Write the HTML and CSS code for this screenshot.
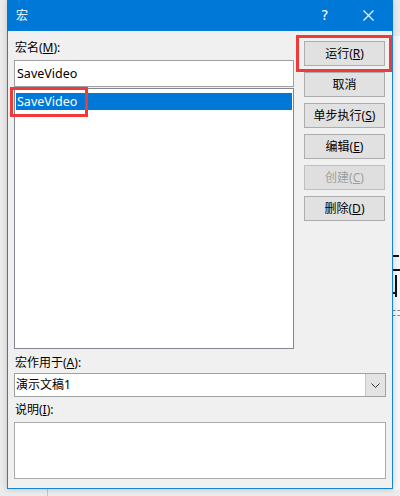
FILE: index.html
```html
<!DOCTYPE html>
<html lang="zh-CN">
<head>
<meta charset="utf-8">
<title>宏</title>
<link rel="stylesheet" href="styles.css">
</head>
<body>
<div class="backdrop">
  <span class="slide"></span>
  <span class="ruler-line"></span>
  <span class="frag fh1"></span>
  <span class="frag fh2"></span>
  <span class="frag fv"></span>
  <span class="frag fh3"></span>
  <span class="dash d1"></span>
  <span class="dash d2"></span>
</div>
<div class="dialog">
  <div class="titlebar">
    <span class="title">宏</span>
    <span class="help">?</span>
    <span class="close"><svg width="11" height="11" viewBox="0 0 11 11"><path d="M0.5 0.5 L10.5 10.5 M10.5 0.5 L0.5 10.5" stroke="#fff" stroke-width="1.1" fill="none"/></svg></span>
  </div>
  <div class="content">
    <div class="top">
      <div class="left">
        <div class="lbl">宏名(<u>M</u>):</div>
        <div class="input">SaveVideo</div>
        <div class="list">
          <div class="item sel">SaveVideo</div>
          <span class="mark mark-item"></span>
        </div>
      </div>
      <div class="buttons">
        <div class="btn">运行(<u>R</u>)<span class="mark mark-run"></span></div>
        <div class="btn">取消</div>
        <div class="btn">单步执行(<u>S</u>)</div>
        <div class="btn">编辑(<u>E</u>)</div>
        <div class="btn disabled">创建(<u>C</u>)</div>
        <div class="btn">删除(<u>D</u>)</div>
      </div>
    </div>
    <div class="lbl lbl-scope">宏作用于(<u>A</u>):</div>
    <div class="combo">
      <span class="val">演示文稿1</span>
      <span class="drop"><svg width="9" height="5" viewBox="0 0 9 5"><path d="M0.5 0.5 L4.5 4.5 L8.5 0.5" stroke="#333" stroke-width="1" fill="none"/></svg></span>
    </div>
    <div class="lbl lbl-desc">说明(<u>I</u>):</div>
    <div class="textarea"></div>
  </div>
</div>
</body>
</html>
```

FILE: styles.css
```css
* { box-sizing: border-box; }
html, body { margin: 0; padding: 0; }
body {
  width: 400px;
  height: 496px;
  overflow: hidden;
  background: #ebebeb;
  font-family: "Noto Sans", "Noto Sans CJK SC", sans-serif;
  font-size: 12px;
  color: #000;
  position: relative;
}

/* background behind the dialog */
.backdrop { position: absolute; left: 0; top: 0; width: 400px; height: 496px; }
.backdrop span { position: absolute; display: block; }
.slide { left: 393px; top: 36px; width: 7px; height: 454px; background: #f7f7f7; }
.ruler-line { left: 47px; top: 489px; width: 1px; height: 7px; background: #c6c6c6; }
.frag { background: #111; }
.fh1 { left: 393px; top: 255px; width: 6px; height: 2px; }
.fh2 { left: 392px; top: 269px; width: 8px; height: 2px; }
.fv { left: 395px; top: 275px; width: 2px; height: 22px; }
.fh3 { left: 393px; top: 292px; width: 3px; height: 2px; }
.dash { left: 393px; width: 7px; height: 0; border-top: 1px dashed #8a8a8a; }
.d1 { top: 310px; }
.d2 { top: 315px; }

.dialog {
  position: relative;
  margin-left: 7px;
  width: 386px;
  height: 489px;
  border: 1px solid #1883d7;
  border-top: none;
  background: #f0f0f0;
  box-shadow: 0 0 6px rgba(0,0,0,0.18);
}

.titlebar {
  height: 31px;
  background: #0078d7;
  color: #fff;
  display: flex;
  align-items: center;
  margin: 0 -1px;
  padding-left: 9px;
}
.title { font-size: 12px; line-height: 31px; }
.help {
  margin-left: auto;
  font-family: "DejaVu Sans", sans-serif;
  font-size: 14px;
  line-height: 31px;
  width: 10px;
  margin-right: 32px;
}
.close { width: 11px; height: 11px; margin-right: 19px; display: flex; }

.content { padding: 9px 6px 0 6px; }

.top {
  display: grid;
  grid-template-columns: 280px 81px;
  column-gap: 10px;
}
.left { display: flex; flex-direction: column; }

.lbl { height: 16px; line-height: 16px; white-space: nowrap; padding-left: 1px; }
.lbl u { text-underline-offset: 1px; }

.input {
  margin-top: 4px;
  height: 27px;
  border: 1px solid #a0a0a0;
  background: #fff;
  line-height: 25px;
  padding-left: 2px;
  font-size: 12.5px;
}
.list {
  position: relative;
  margin-top: 1px;
  height: 261px;
  border: 1px solid #828790;
  background: #fff;
  padding: 4px 1px 0 1px;
}
.item {
  height: 17px;
  line-height: 17px;
  padding-left: 1px;
  font-size: 12.5px;
}
.item.sel { background: #0078d7; color: #fff; }

.mark { position: absolute; border: 3px solid #ef3a3a; pointer-events: none; }
.mark-item { left: -5px; top: -2px; width: 78px; height: 30px; }
.mark-run { left: -9px; top: -7px; width: 96px; height: 37px; }

.buttons { display: flex; flex-direction: column; gap: 6px; margin-top: 1px; }
.btn {
  position: relative;
  height: 25px;
  border: 1px solid #adadad;
  background: #e1e1e1;
  text-align: center;
  line-height: 23px;
  white-space: nowrap;
}
.btn.disabled { color: #a0a0a0; border-color: #bfbfbf; background: #dfdfdf; }

.lbl-scope { margin-top: 6px; }
.combo {
  margin-top: 2px;
  width: 372px;
  height: 24px;
  border: 1px solid #a0a0a0;
  background: #fff;
  display: flex;
  align-items: stretch;
}
.combo .val { flex: 1; line-height: 22px; padding-left: 1px; }
.drop {
  width: 20px;
  background: #e3e3e3;
  border-left: 1px solid #c8c8c8;
  display: flex;
  align-items: center;
  justify-content: center;
}
.lbl-desc { margin-top: 5px; }
.textarea {
  margin-top: 4px;
  width: 372px;
  height: 57px;
  border: 1px solid #ababab;
  background: #fff;
}
```
